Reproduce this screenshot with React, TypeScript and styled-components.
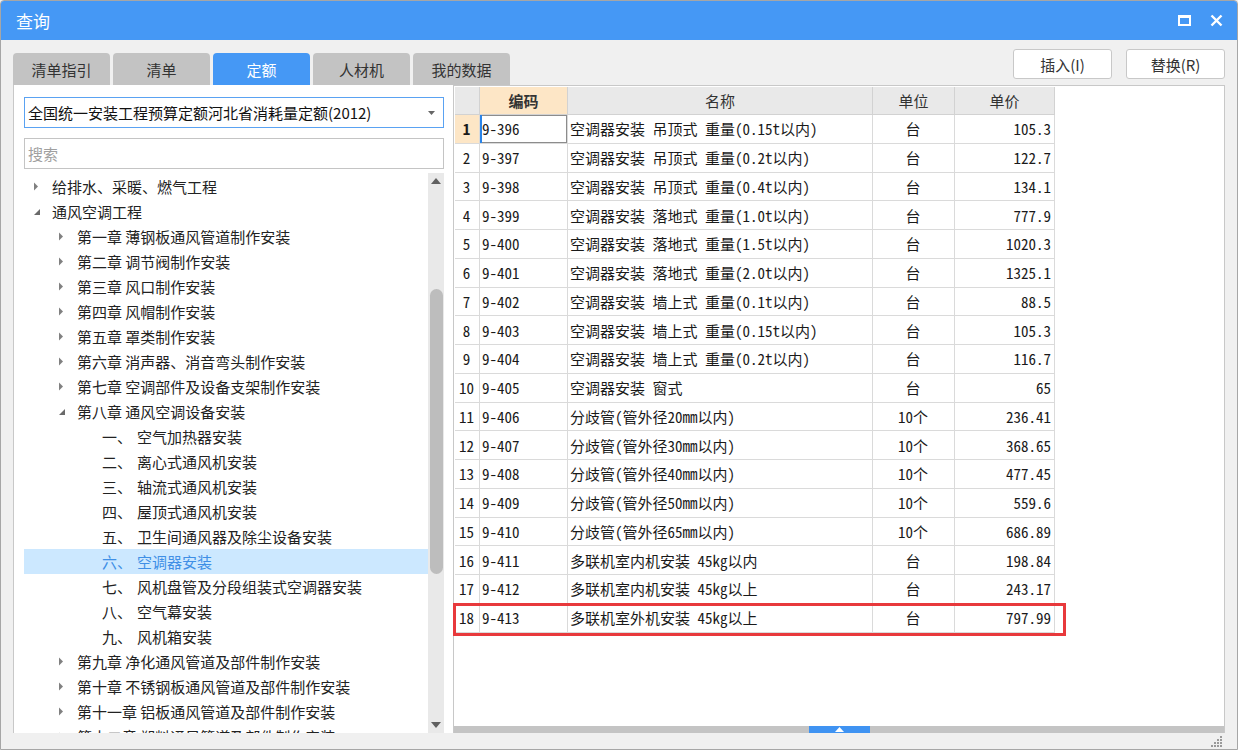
import React from "react";
import styled, { createGlobalStyle, css } from "styled-components";

const GlobalStyle = createGlobalStyle`
  html, body {
    margin: 0;
    padding: 0;
    width: 1238px;
    height: 750px;
    overflow: hidden;
    background: #f0f0f0;
  }
  * { box-sizing: border-box; }
`;

const SANS = `"Noto Sans CJK SC", "Noto Sans", sans-serif`;
const MONO = `"Noto Sans Mono CJK SC", "Liberation Mono", "Noto Sans CJK SC", monospace`;

const Window = styled.div`
  width: 1238px;
  height: 750px;
  display: flex;
  flex-direction: column;
  background: #f0f0f0;
  border: 1px solid #a6a6a6;
  border-radius: 4px 4px 0 0;
  overflow: hidden;
  font-family: ${SANS};
`;

const TitleBar = styled.div`
  height: 39px;
  flex: none;
  display: flex;
  align-items: center;
  padding: 0 14px 0 15px;
  background: #4598f5;
  color: #fff;
  font-size: 17px;
`;

const TitleText = styled.div`
  flex: 1;
`;

const TitleButtons = styled.div`
  display: flex;
  align-items: center;
  gap: 19px;
`;

const Body = styled.div`
  flex: 1;
  display: flex;
  flex-direction: column;
  padding: 0 12px 0 12px;
  min-height: 0;
`;

const Toolbar = styled.div`
  height: 45px;
  flex: none;
  display: flex;
  align-items: flex-end;
`;

const Tabs = styled.div`
  display: flex;
  gap: 3px;
`;

const Tab = styled.div<{ $active?: boolean }>`
  width: 97px;
  height: 32px;
  display: flex;
  align-items: center;
  justify-content: center;
  border-radius: 4px 4px 0 0;
  font-size: 15px;
  color: #333;
  background: #c3c3c3;
  ${(p) =>
    p.$active &&
    css`
      background: #4598f5;
      color: #fff;
    `}
`;

const Buttons = styled.div`
  margin-left: auto;
  align-self: flex-start;
  margin-top: 9px;
  display: flex;
  gap: 14px;
`;

const Button = styled.div`
  width: 99px;
  height: 30px;
  display: flex;
  align-items: center;
  justify-content: center;
  background: #fff;
  border: 1px solid #c8c8c8;
  border-radius: 3px;
  font-size: 15px;
  color: #333;
`;

const Main = styled.div`
  height: 648px;
  flex: none;
  display: flex;
`;

const LeftPanel = styled.div`
  width: 440px;
  flex: none;
  display: flex;
  flex-direction: column;
  background: #fff;
  border-left: 1px solid #c8c8c8;
  padding: 12px 9px 0 10px;
`;

const Select = styled.div`
  height: 31px;
  flex: none;
  display: flex;
  align-items: center;
  border: 1px solid #5aa2f2;
  padding: 0 8px 0 3px;
  font-size: 15px;
  color: #111;
`;

const SelectText = styled.div`
  flex: 1;
  white-space: nowrap;
`;

const SearchBox = styled.div`
  height: 31px;
  flex: none;
  margin-top: 10px;
  display: flex;
  align-items: center;
  border: 1px solid #c4c4c4;
  padding: 0 3px;
  font-size: 15px;
  color: #a0a0a0;
`;

const TreeArea = styled.div`
  flex: 1;
  min-height: 0;
  margin-top: 4px;
  display: flex;
`;

const TreeList = styled.div`
  flex: 1;
  overflow: hidden;
  padding-top: 1px;
`;

const TreeRow = styled.div<{ $level: number; $selected?: boolean }>`
  height: 25px;
  display: flex;
  align-items: center;
  padding-left: ${(p) => 9 + p.$level * 25}px;
  font-size: 15px;
  color: #222;
  white-space: nowrap;
  ${(p) =>
    p.$selected &&
    css`
      background: #cce8ff;
      color: #3f8fe6;
    `}
`;

const Arrow = styled.div`
  width: 19px;
  flex: none;
  display: flex;
  align-items: center;
`;

const Ordinal = styled.span`
  width: 35px;
  flex: none;
`;

const VScroll = styled.div`
  width: 16px;
  flex: none;
  background: #e9e9e9;
  display: flex;
  flex-direction: column;
  align-items: center;
  padding: 5px 0 5px;
`;

const ScrollThumb = styled.div`
  width: 13px;
  height: 285px;
  margin-top: 105px;
  border-radius: 7px;
  background: #bdbdbd;
`;

const ScrollSpacer = styled.div`
  flex: 1;
`;

const GridPanel = styled.div`
  flex: 1;
  display: flex;
  flex-direction: column;
  background: #fff;
  border: 1px solid #c8c8c8;
  border-bottom: none;
  padding: 1px 1px 0 1px;
`;

const GridBody = styled.div`
  flex: 1;
  min-height: 0;
`;

const Table = styled.div`
  width: 600px;
  display: flex;
  flex-direction: column;
`;

const HeaderRow = styled.div`
  height: 28px;
  display: flex;
`;

const HeaderCell = styled.div<{ $w: number; $accent?: boolean }>`
  width: ${(p) => p.$w}px;
  flex: none;
  display: flex;
  align-items: center;
  justify-content: center;
  background: ${(p) => (p.$accent ? "#fde6c6" : "#e9e9e9")};
  border-right: 1px solid #d2d2d2;
  border-bottom: 1px solid #d2d2d2;
  font-size: 15px;
  color: #333;
  font-weight: ${(p) => (p.$accent ? 700 : 400)};
`;

const DataRow = styled.div<{ $marked?: boolean }>`
  height: 28.75px;
  display: flex;
  position: relative;
  ${(p) =>
    p.$marked &&
    css`
      &::after {
        content: "";
        position: absolute;
        left: -2px;
        right: -11px;
        top: -1px;
        bottom: -3px;
        border: 3px solid #e8393c;
        pointer-events: none;
      }
    `}
`;

const Cell = styled.div<{
  $w: number;
  $align?: "left" | "center" | "right";
  $accent?: boolean;
  $focused?: boolean;
}>`
  width: ${(p) => p.$w}px;
  flex: none;
  display: flex;
  align-items: center;
  justify-content: ${(p) =>
    p.$align === "right" ? "flex-end" : p.$align === "center" ? "center" : "flex-start"};
  padding: 0 3px 0 2px;
  border-right: 1px solid #dadada;
  border-bottom: 1px solid #dadada;
  font-family: ${MONO};
  font-size: 15px;
  color: #1a1a1a;
  white-space: nowrap;
  overflow: hidden;
  background: ${(p) => (p.$accent ? "#fde6c6" : "#fff")};
  font-weight: ${(p) => (p.$accent ? 700 : 400)};
  ${(p) =>
    p.$focused &&
    css`
      box-shadow: inset 2px 0 0 #2a84e8, inset -1px -1px 0 #8c8c8c, inset 0 1px 0 #8c8c8c;
    `}
`;

const HScroll = styled.div`
  height: 7px;
  flex: none;
  background: #c4c4c4;
  display: flex;
  justify-content: center;
  margin: 0 -1px;
`;

const HScrollHandle = styled.div`
  width: 61px;
  background: #3f93f2;
  display: flex;
  align-items: center;
  justify-content: center;
`;

const Footer = styled.div`
  flex: 1;
  display: flex;
  justify-content: flex-end;
  align-items: flex-end;
  padding: 0 2px 2px 0;
`;

const cols = { num: 25, code: 88, name: 305, unit: 82, price: 100 };

const rows: [string, string, string, string][] = [
  ["9-396", "空调器安装 吊顶式 重量(0.15t以内)", "台", "105.3"],
  ["9-397", "空调器安装 吊顶式 重量(0.2t以内)", "台", "122.7"],
  ["9-398", "空调器安装 吊顶式 重量(0.4t以内)", "台", "134.1"],
  ["9-399", "空调器安装 落地式 重量(1.0t以内)", "台", "777.9"],
  ["9-400", "空调器安装 落地式 重量(1.5t以内)", "台", "1020.3"],
  ["9-401", "空调器安装 落地式 重量(2.0t以内)", "台", "1325.1"],
  ["9-402", "空调器安装 墙上式 重量(0.1t以内)", "台", "88.5"],
  ["9-403", "空调器安装 墙上式 重量(0.15t以内)", "台", "105.3"],
  ["9-404", "空调器安装 墙上式 重量(0.2t以内)", "台", "116.7"],
  ["9-405", "空调器安装 窗式", "台", "65"],
  ["9-406", "分歧管(管外径20mm以内)", "10个", "236.41"],
  ["9-407", "分歧管(管外径30mm以内)", "10个", "368.65"],
  ["9-408", "分歧管(管外径40mm以内)", "10个", "477.45"],
  ["9-409", "分歧管(管外径50mm以内)", "10个", "559.6"],
  ["9-410", "分歧管(管外径65mm以内)", "10个", "686.89"],
  ["9-411", "多联机室内机安装 45kg以内", "台", "198.84"],
  ["9-412", "多联机室内机安装 45kg以上", "台", "243.17"],
  ["9-413", "多联机室外机安装 45kg以上", "台", "797.99"],
];

type Node = {
  level: number;
  text: string;
  ordinal?: string;
  arrow?: "closed" | "open";
  selected?: boolean;
};

const tree: Node[] = [
  { level: 0, text: "给排水、采暖、燃气工程", arrow: "closed" },
  { level: 0, text: "通风空调工程", arrow: "open" },
  { level: 1, text: "第一章 薄钢板通风管道制作安装", arrow: "closed" },
  { level: 1, text: "第二章 调节阀制作安装", arrow: "closed" },
  { level: 1, text: "第三章 风口制作安装", arrow: "closed" },
  { level: 1, text: "第四章 风帽制作安装", arrow: "closed" },
  { level: 1, text: "第五章 罩类制作安装", arrow: "closed" },
  { level: 1, text: "第六章 消声器、消音弯头制作安装", arrow: "closed" },
  { level: 1, text: "第七章 空调部件及设备支架制作安装", arrow: "closed" },
  { level: 1, text: "第八章 通风空调设备安装", arrow: "open" },
  { level: 2, ordinal: "一、", text: "空气加热器安装" },
  { level: 2, ordinal: "二、", text: "离心式通风机安装" },
  { level: 2, ordinal: "三、", text: "轴流式通风机安装" },
  { level: 2, ordinal: "四、", text: "屋顶式通风机安装" },
  { level: 2, ordinal: "五、", text: "卫生间通风器及除尘设备安装" },
  { level: 2, ordinal: "六、", text: "空调器安装", selected: true },
  { level: 2, ordinal: "七、", text: "风机盘管及分段组装式空调器安装" },
  { level: 2, ordinal: "八、", text: "空气幕安装" },
  { level: 2, ordinal: "九、", text: "风机箱安装" },
  { level: 1, text: "第九章 净化通风管道及部件制作安装", arrow: "closed" },
  { level: 1, text: "第十章 不锈钢板通风管道及部件制作安装", arrow: "closed" },
  { level: 1, text: "第十一章 铝板通风管道及部件制作安装", arrow: "closed" },
  { level: 1, text: "第十二章 塑料通风管道及部件制作安装", arrow: "closed" },
];

const ClosedArrow = () => (
  <svg width="6" height="9" viewBox="0 0 6 9">
    <path d="M1 0.5 L5 4.5 L1 8.5 Z" fill="#808080" />
  </svg>
);

const OpenArrow = () => (
  <svg width="8" height="8" viewBox="0 0 8 8">
    <path d="M7 1 L7 7 L1 7 Z" fill="#6a6a6a" />
  </svg>
);

const tabs = ["清单指引", "清单", "定额", "人材机", "我的数据"];

export default function App() {
  return (
    <>
      <GlobalStyle />
      <Window>
        <TitleBar>
          <TitleText>查询</TitleText>
          <TitleButtons>
            <svg width="13" height="11" viewBox="0 0 13 11">
              <rect x="1" y="1.5" width="11" height="8.5" fill="none" stroke="#fff" strokeWidth="2" />
              <rect x="0" y="0" width="13" height="3" fill="#fff" />
            </svg>
            <svg width="13" height="13" viewBox="0 0 13 13">
              <path d="M1.5 1.5 L11.5 11.5 M11.5 1.5 L1.5 11.5" stroke="#fff" strokeWidth="2.4" />
            </svg>
          </TitleButtons>
        </TitleBar>
        <Body>
          <Toolbar>
            <Tabs>
              {tabs.map((t) => (
                <Tab key={t} $active={t === "定额"}>
                  {t}
                </Tab>
              ))}
            </Tabs>
            <Buttons>
              <Button>插入(I)</Button>
              <Button>替换(R)</Button>
            </Buttons>
          </Toolbar>
          <Main>
            <LeftPanel>
              <Select>
                <SelectText>全国统一安装工程预算定额河北省消耗量定额(2012)</SelectText>
                <svg width="7" height="4" viewBox="0 0 7 4">
                  <path d="M0 0 L7 0 L3.5 4 Z" fill="#666" />
                </svg>
              </Select>
              <SearchBox>搜索</SearchBox>
              <TreeArea>
                <TreeList>
                  {tree.map((n, i) => (
                    <TreeRow key={i} $level={n.level} $selected={n.selected}>
                      <Arrow>
                        {n.arrow === "closed" && <ClosedArrow />}
                        {n.arrow === "open" && <OpenArrow />}
                      </Arrow>
                      {n.ordinal && <Ordinal>{n.ordinal}</Ordinal>}
                      {n.text}
                    </TreeRow>
                  ))}
                </TreeList>
                <VScroll>
                  <svg width="10" height="6" viewBox="0 0 10 6">
                    <path d="M0 6 L5 0 L10 6 Z" fill="#606060" />
                  </svg>
                  <ScrollThumb />
                  <ScrollSpacer />
                  <svg width="10" height="6" viewBox="0 0 10 6">
                    <path d="M0 0 L10 0 L5 6 Z" fill="#606060" />
                  </svg>
                </VScroll>
              </TreeArea>
            </LeftPanel>
            <GridPanel>
              <GridBody>
                <Table>
                  <HeaderRow>
                    <HeaderCell $w={cols.num} />
                    <HeaderCell $w={cols.code} $accent>
                      编码
                    </HeaderCell>
                    <HeaderCell $w={cols.name}>名称</HeaderCell>
                    <HeaderCell $w={cols.unit}>单位</HeaderCell>
                    <HeaderCell $w={cols.price}>单价</HeaderCell>
                  </HeaderRow>
                  {rows.map(([code, name, unit, price], i) => (
                    <DataRow key={code} $marked={i === rows.length - 1}>
                      <Cell $w={cols.num} $align="center" $accent={i === 0}>
                        {i + 1}
                      </Cell>
                      <Cell $w={cols.code} $focused={i === 0}>
                        {code}
                      </Cell>
                      <Cell $w={cols.name}>{name}</Cell>
                      <Cell $w={cols.unit} $align="center">
                        {unit}
                      </Cell>
                      <Cell $w={cols.price} $align="right">
                        {price}
                      </Cell>
                    </DataRow>
                  ))}
                </Table>
              </GridBody>
              <HScroll>
                <HScrollHandle>
                  <svg width="9" height="5" viewBox="0 0 9 5">
                    <path d="M0 5 L4.5 0 L9 5 Z" fill="#fff" />
                  </svg>
                </HScrollHandle>
              </HScroll>
            </GridPanel>
          </Main>
          <Footer>
            <svg width="12" height="12" viewBox="0 0 12 12">
              <g fill="#9a9a9a">
                <rect x="9" y="1" width="2" height="2" />
                <rect x="6" y="4" width="2" height="2" />
                <rect x="9" y="4" width="2" height="2" />
                <rect x="3" y="7" width="2" height="2" />
                <rect x="6" y="7" width="2" height="2" />
                <rect x="9" y="7" width="2" height="2" />
                <rect x="0" y="10" width="2" height="2" />
                <rect x="3" y="10" width="2" height="2" />
                <rect x="6" y="10" width="2" height="2" />
                <rect x="9" y="10" width="2" height="2" />
              </g>
            </svg>
          </Footer>
        </Body>
      </Window>
    </>
  );
}
